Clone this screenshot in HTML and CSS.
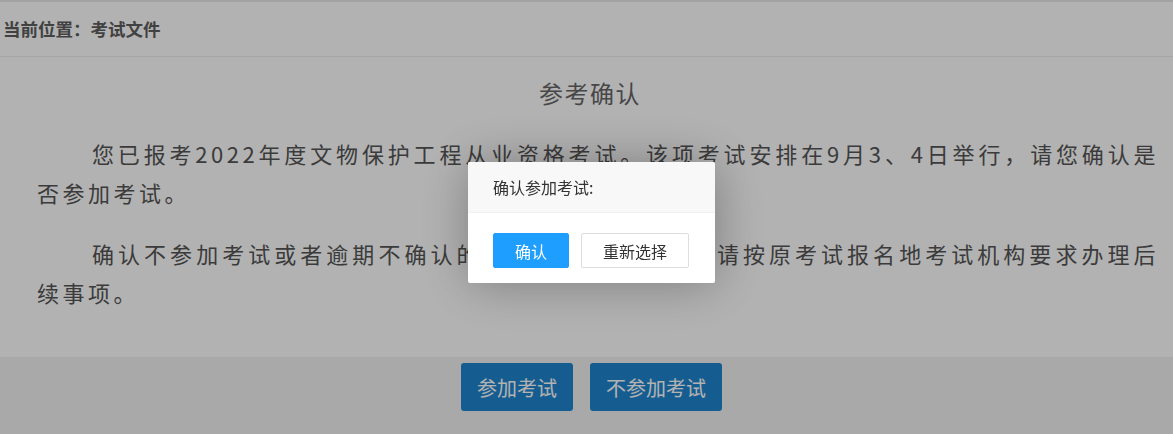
FILE: index.html
```html
<!DOCTYPE html>
<html lang="zh-CN">
<head>
<meta charset="utf-8">
<title>考试文件</title>
<link rel="stylesheet" href="styles.css">
</head>
<body>
<div class="page">
  <div class="crumb">当前位置：考试文件</div>
  <div class="main">
    <h2 class="title">参考确认</h2>
    <p class="para">您已报考2022年度文物保护工程从业资格考试。该项考试安排在9月3、4日举行，请您确认是否参加考试。</p>
    <p class="para">确认不参加考试或者逾期不确认的，即视为放弃考试，请按原考试报名地考试机构要求办理后续事项。</p>
  </div>
  <div class="actions">
    <button class="act-btn">参加考试</button>
    <button class="act-btn">不参加考试</button>
  </div>
</div>
<div class="shade"></div>
<div class="dialog">
  <div class="dialog-title">确认参加考试:</div>
  <div class="dialog-btns">
    <button class="dbtn dbtn-primary">确认</button>
    <button class="dbtn">重新选择</button>
  </div>
</div>
</body>
</html>
```
FILE: styles.css
```css
html, body {
  margin: 0;
  padding: 0;
  background: #f3f3f3;
  height: 100%;
  overflow: hidden;
}
body {
  font-family: "Noto Sans CJK SC", "Microsoft YaHei", sans-serif;
}
.page {
  display: flex;
  flex-direction: column;
  min-height: 100%;
}
.crumb {
  background: #fff;
  border-top: 2px solid #e8e8e8;
  border-bottom: 1px solid #ececec;
  height: 54px;
  line-height: 54px;
  padding-left: 3px;
  font-size: 17.5px;
  font-weight: bold;
  color: #5e5e5e;
  white-space: nowrap;
}
.main {
  background: #fff;
  padding: 18px 0 45px 37px;
}
.title {
  margin: 0 0 23px 0;
  padding-right: 30px;
  text-align: center;
  font-size: 24px;
  line-height: 36px;
  font-weight: normal;
  letter-spacing: 1.5px;
  color: #666;
}
.para {
  width: 1122px;
  margin: 0 0 22px 0;
  font-size: 22px;
  line-height: 39px;
  letter-spacing: 3.5px;
  text-indent: 55px;
  text-align: justify;
  color: #555;
}
.para:last-child {
  margin-bottom: 0;
}
.actions {
  flex: 1;
  display: flex;
  justify-content: center;
  gap: 17px;
  padding: 6px 0 0 10px;
  background: #f3f3f3;
}
.act-btn {
  height: 48px;
  padding: 0 16px;
  border: none;
  border-radius: 3px;
  background: #1f86ce;
  color: #fff;
  font-family: "Noto Sans CJK SC", "Microsoft YaHei", sans-serif;
  font-size: 20px;
}
.shade {
  position: fixed;
  inset: 0;
  background: rgba(0, 0, 0, 0.3);
}
.dialog {
  position: fixed;
  left: 468px;
  top: 162px;
  width: 247px;
  background: #fff;
  border-radius: 2px;
  box-shadow: 1px 1px 50px rgba(0, 0, 0, 0.3);
}
.dialog-title {
  height: 50px;
  line-height: 50px;
  padding-left: 25px;
  background: #f8f8f8;
  border-bottom: 1px solid #f0f0f0;
  border-radius: 2px 2px 0 0;
  font-size: 16px;
  color: #333;
}
.dialog-btns {
  display: flex;
  gap: 12px;
  padding: 20px 0 15px 25px;
}
.dbtn {
  height: 35px;
  padding: 0 21px;
  border: 1px solid #dedede;
  border-radius: 2px;
  background: #fff;
  color: #333;
  font-family: "Noto Sans CJK SC", "Microsoft YaHei", sans-serif;
  font-size: 16px;
}
.dbtn-primary {
  background: #1e9fff;
  border-color: #1e9fff;
  color: #fff;
}
```
